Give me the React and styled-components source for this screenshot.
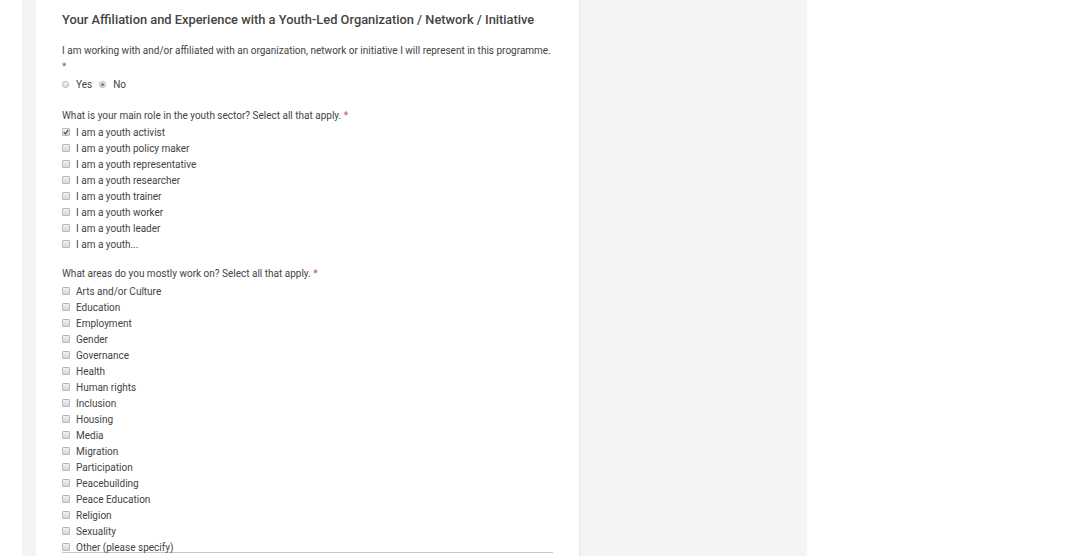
import React from 'react';
import styled, { createGlobalStyle } from 'styled-components';

const GlobalStyle = createGlobalStyle`
  html, body {
    margin: 0;
    padding: 0;
    background: #ffffff;
    font-family: Roboto, "Liberation Sans", Arial, sans-serif;
  }
`;

const Page = styled.div`
  width: 1081px;
  height: 556px;
  overflow: hidden;
  background: #fff;
`;

const Column = styled.div`
  margin-left: 22px;
  width: 785px;
  height: 556px;
  background: #f4f4f4;
  padding-left: 14px;
  box-sizing: border-box;
`;

const Card = styled.div`
  width: 544px;
  height: 100%;
  background: #fff;
  border-right: 1px solid #e6e6e6;
  box-sizing: border-box;
  padding: 11px 26px 0 26px;
`;

const Title = styled.h2`
  margin: 0 0 15px;
  font-family: Roboto, "Noto Sans", sans-serif;
  font-weight: 500;
  font-size: 12.85px;
  line-height: 17px;
  color: #444;
  white-space: nowrap;
`;

const Question = styled.div`
  font-size: 10px;
  line-height: 16px;
  color: #444;
  margin-top: ${(p) => p.$top || 0}px;
`;

const Req = styled.span`
  color: #c0504d;
`;

const ReqLine = styled.div`
  font-size: 10px;
  line-height: 16px;
  color: #c0504d;
`;

const RadioRow = styled.div`
  display: flex;
  align-items: center;
  height: 16px;
  margin-top: 1px;
  font-size: 10px;
  color: #444;
`;

const RadioItem = styled.label`
  display: flex;
  align-items: center;
  gap: 7px;
  margin-right: 7px;
`;

const Radio = styled.span`
  width: 7px;
  height: 7px;
  border-radius: 50%;
  border: 1px solid #b5b5b5;
  background: linear-gradient(#f6f6f6, #dcdcdc);
  box-sizing: border-box;
  position: relative;
  &::after {
    content: '';
    display: ${(p) => (p.$on ? 'block' : 'none')};
    position: absolute;
    left: 1px;
    top: 1px;
    width: 3px;
    height: 3px;
    border-radius: 50%;
    background: #777;
  }
`;

const List = styled.div`
  display: flex;
  flex-direction: column;
  margin-top: ${(p) => p.$top || 0}px;
`;

const Item = styled.label`
  display: flex;
  align-items: center;
  height: 16px;
  font-size: 10px;
  color: #444;
  gap: 6px;
`;

const Box = styled.span`
  width: 8px;
  height: 8px;
  border: 1px solid #b8b8b8;
  border-radius: 1px;
  background: linear-gradient(#f4f4f4, #d6d6d6);
  box-sizing: border-box;
  display: flex;
  align-items: center;
  justify-content: center;
  flex-shrink: 0;
`;

const Rule = styled.div`
  width: 491px;
  height: 1px;
  background: #c8c8c8;
  margin-top: -3px;
`;

const roles = [
  'I am a youth activist',
  'I am a youth policy maker',
  'I am a youth representative',
  'I am a youth researcher',
  'I am a youth trainer',
  'I am a youth worker',
  'I am a youth leader',
  'I am a youth...',
];

const areas = [
  'Arts and/or Culture',
  'Education',
  'Employment',
  'Gender',
  'Governance',
  'Health',
  'Human rights',
  'Inclusion',
  'Housing',
  'Media',
  'Migration',
  'Participation',
  'Peacebuilding',
  'Peace Education',
  'Religion',
  'Sexuality',
  'Other (please specify)',
];

function Check({ on }) {
  return (
    <Box>
      {on && (
        <svg width="6" height="6" viewBox="0 0 6 6">
          <path d="M0.8 3.2 L2.4 4.8 L5.3 0.9" fill="none" stroke="#444" strokeWidth="1.2" />
        </svg>
      )}
    </Box>
  );
}

function App() {
  return (
    <Page>
      <GlobalStyle />
      <Column>
        <Card>
          <Title>Your Affiliation and Experience with a Youth-Led Organization / Network / Initiative</Title>
          <Question>
            I am working with and/or affiliated with an organization, network or initiative I will represent in this programme.
          </Question>
          <ReqLine>*</ReqLine>
          <RadioRow>
            <RadioItem><Radio />Yes</RadioItem>
            <RadioItem><Radio $on />No</RadioItem>
          </RadioRow>

          <Question $top={16}>What is your main role in the youth sector? Select all that apply. <Req>*</Req></Question>
          <List>
            {roles.map((r, i) => (
              <Item key={r}><Check on={i === 0} />{r}</Item>
            ))}
          </List>

          <Question $top={14}>What areas do you mostly work on? Select all that apply. <Req>*</Req></Question>
          <List $top={1}>
            {areas.map((a) => (
              <Item key={a}><Check />{a}</Item>
            ))}
          </List>
          <Rule />
        </Card>
      </Column>
    </Page>
  );
}

export default App;
